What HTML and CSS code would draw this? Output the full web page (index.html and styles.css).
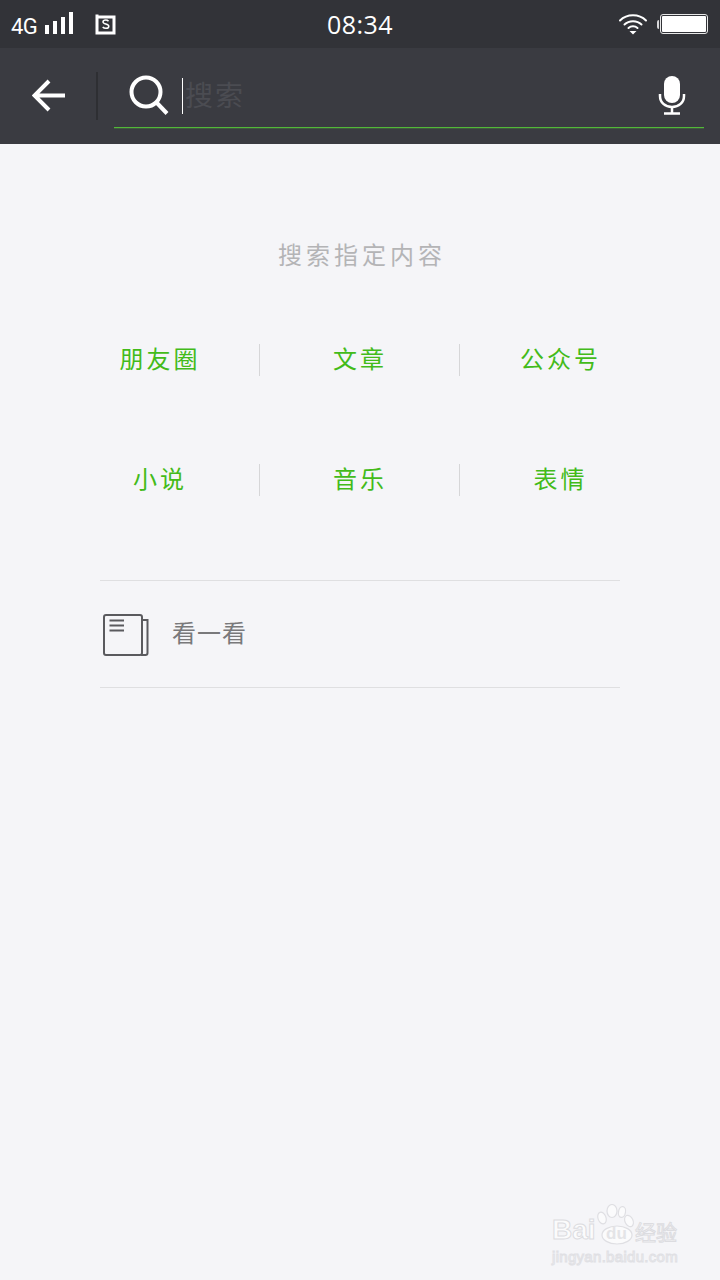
FILE: index.html
```html
<!DOCTYPE html>
<html lang="zh-CN">
  <head>
    <meta charset="UTF-8" />
    <meta name="viewport" content="width=device-width, initial-scale=1.0" />
    <title>搜索</title>
    <link rel="stylesheet" href="styles.css">
  </head>
  <body>
    <div class="status-bar">
      <div class="status-left">
        <span class="net">4G</span>
        <span class="signal"><i class="s1"></i><i class="s2"></i><i class="s3"></i><i class="s4"></i></span>
        <svg class="sim" width="22" height="22" viewBox="0 0 22 22">
          <path d="M3 1.500V20H20V4H4" fill="none" stroke="#fff" stroke-width="3" />
          <path d="M14.500 8.200C13.800 7.300 12.800 7 11.800 7C10.300 7 9 7.700 9 9C9 11.600 14.800 10.400 14.800 13.200C14.800 14.600 13.400 15.300 11.900 15.300C10.700 15.300 9.500 14.900 8.700 14" fill="none" stroke="#fff" stroke-width="1.500" />
        </svg>
      </div>
      <div class="clock">08:34</div>
      <div class="status-right">
        <svg width="30" height="24" viewBox="0 0 30 24">
          <g fill="none" stroke="#fff" stroke-width="2" stroke-linecap="round">
            <path d="M2 8.500C9 1.500 21 1.500 28 8.500" />
            <path d="M6.500 12.500C11 8 19 8 23.500 12.500" />
            <path d="M10.500 16C13 13.800 17 13.800 19.500 16" />
          </g>
          <path d="M11.500 19H18.500L15 22.500Z" fill="#fff" />
        </svg>
        <span class="battery-tip"></span>
        <span class="battery"><span class="battery-fill"></span></span>
      </div>
    </div>

    <div class="search-bar">
      <div class="back">
        <svg width="34" height="34" viewBox="0 0 34 34">
          <path d="M33 16.500H4M17 2L2.500 16.500L17 31" fill="none" stroke="#fff" stroke-width="4" />
        </svg>
      </div>
      <div class="search-field">
        <svg class="search-icon" width="40" height="40" viewBox="0 0 40 40">
          <circle cx="17" cy="17" r="14.500" fill="none" stroke="#fff" stroke-width="4" />
          <path d="M27.500 27.500L38 38.500" fill="none" stroke="#fff" stroke-width="4" />
        </svg>
        <span class="cursor"></span>
        <span class="placeholder">搜索</span>
        <svg class="mic" width="28" height="40" viewBox="0 0 28 40">
          <rect x="6" y="1" width="16" height="27" rx="8" fill="#fff" />
          <path d="M2 19V21C2 27.500 7 32 14 32C21 32 26 27.500 26 21V19" fill="none" stroke="#fff" stroke-width="2.500" />
          <path d="M14 32V38M6 38.500H22" fill="none" stroke="#fff" stroke-width="2.500" />
        </svg>
      </div>
    </div>

    <div class="content">
      <div class="title">搜索指定内容</div>
      <div class="types">
        <div class="type">朋友圈</div>
        <div class="type">文章</div>
        <div class="type">公众号</div>
        <div class="type">小说</div>
        <div class="type">音乐</div>
        <div class="type">表情</div>
      </div>
      <div class="look">
        <svg class="look-icon" width="46" height="42" viewBox="0 0 46 42">
          <rect x="1" y="1" width="38" height="40" rx="2" fill="none" stroke="#5a5a5e" stroke-width="2" />
          <path d="M39 6H44.500V39C44.500 40.200 43.700 41 42.500 41H38M6.500 6.500H21M6.500 11.500H21M6.500 16.500H21" fill="none" stroke="#5a5a5e" stroke-width="2" />
        </svg>
        <span class="look-text">看一看</span>
      </div>
    </div>

    <div class="watermark">
      <div class="wm-top">
        <span class="wm-bai">Bai</span>
        <span class="wm-paw">
          <svg width="40" height="42" viewBox="0 0 40 42">
            <g fill="#fbfbfc" stroke="#dfdfe3" stroke-width="1.200">
              <ellipse cx="7" cy="14" rx="4" ry="6" transform="rotate(-20 7 14)" />
              <ellipse cx="17" cy="7" rx="5" ry="6.500" />
              <ellipse cx="27" cy="8" rx="3.500" ry="5.500" transform="rotate(10 27 8)" />
              <ellipse cx="34" cy="17" rx="4" ry="6" transform="rotate(-25 34 17)" />
              <ellipse cx="22" cy="31" rx="15" ry="9" />
            </g>
          </svg>
          <span class="wm-du">du</span>
        </span>
        <span class="wm-cn">经验</span>
      </div>
      <div class="wm-url">jingyan.baidu.com</div>
    </div>
  </body>
</html>
```

FILE: styles.css
```css
html,
body {
  margin: 0;
  padding: 0;
}

body {
  position: relative;
  width: 720px;
  height: 1280px;
  overflow: hidden;
  background: #f5f5f8;
  font-family: "Noto Sans CJK SC", "Noto Sans", sans-serif;
}

.status-bar {
  display: grid;
  grid-template-columns: 1fr auto 1fr;
  align-items: center;
  height: 48px;
  padding: 0 12px;
  box-sizing: border-box;
  background: #323338;
  color: #fff;
}

.status-left {
  display: flex;
  align-items: center;
}

.net {
  width: 33px;
  margin-top: 5px;
  margin-left: -1px;
  margin-right: 1px;
  font-family: Roboto, sans-serif;
  font-size: 22px;
  letter-spacing: -0.500px;
  line-height: 26px;
}

.signal {
  display: flex;
  align-items: flex-end;
  gap: 4px;
  height: 22px;
  margin-top: -2px;
}

.signal i {
  display: block;
  width: 4px;
  background: #fff;
}

.s1 {
  height: 9px;
}

.s2 {
  height: 13px;
}

.s3 {
  height: 17px;
}

.s4 {
  height: 22px;
}

.sim {
  margin-left: 21px;
  margin-top: -1px;
}

.clock {
  font-family: "Open Sans", sans-serif;
  font-size: 25px;
  letter-spacing: 0.500px;
  line-height: 46px;
}

.status-right {
  display: flex;
  align-items: center;
  justify-content: flex-end;
}

.status-right svg {
  margin-right: 9px;
}

.battery-tip {
  width: 2px;
  height: 9px;
  margin-right: 1px;
  border-radius: 2px 0 0 2px;
  background: #d8d8da;
}

.battery {
  display: block;
  width: 48px;
  height: 20px;
  padding: 1px;
  box-sizing: border-box;
  border: 1px solid #e8e8e8;
  border-radius: 3px;
}

.battery-fill {
  display: block;
  height: 100%;
  border-radius: 1px;
  background: #fff;
}

.search-bar {
  display: flex;
  height: 96px;
  padding: 0 16px 0 0;
  box-sizing: border-box;
  background: #3a3b41;
}

.back {
  display: flex;
  align-items: center;
  width: 98px;
  height: 48px;
  margin-top: 24px;
  padding-left: 32px;
  box-sizing: border-box;
  border-right: 2px solid #2e2f33;
  flex-shrink: 0;
}

.search-field {
  display: flex;
  align-items: center;
  flex: 1;
  height: 80px;
  margin-left: 16px;
  padding: 15px 18px 0 15px;
  box-sizing: border-box;
  border-bottom: 1px solid #52b838;
  box-shadow: 0 1px 0 rgba(82, 184, 56, 0.25);
}

.search-icon {
  flex-shrink: 0;
}

.cursor {
  width: 1px;
  height: 36px;
  margin-left: 13px;
  margin-top: 1px;
  background: #fff;
}

.placeholder {
  flex: 1;
  margin-left: 2px;
  margin-top: -2px;
  font-size: 28px;
  letter-spacing: 2px;
  line-height: 40px;
  color: #4b4c52;
}

.mic {
  flex-shrink: 0;
}

.content {
  padding-top: 94px;
}

.title {
  padding-left: 4px;
  font-size: 24px;
  letter-spacing: 4px;
  line-height: 32px;
  text-align: center;
  color: #b4b4b6;
}

.types {
  display: grid;
  grid-template-columns: repeat(3, 200px);
  grid-auto-rows: 32px;
  row-gap: 88px;
  width: 600px;
  margin: 74px auto 0;
}

.type {
  padding-left: 1px;
  font-size: 24px;
  letter-spacing: 3px;
  line-height: 28px;
  text-align: center;
  color: #43bb1a;
  border-right: 1px solid #d6d6d8;
}

.type:nth-child(3n) {
  border-right: none;
}

.look {
  display: flex;
  align-items: center;
  height: 108px;
  width: 520px;
  margin: 84px auto 0;
  padding-left: 3px;
  box-sizing: border-box;
  border-top: 1px solid #dfdfe1;
  border-bottom: 1px solid #dfdfe1;
}

.look-icon {
  margin-top: 2px;
}

.look-text {
  margin-left: 23px;
  margin-top: -6px;
  font-size: 24px;
  letter-spacing: 1px;
  color: #79797b;
}

/* 水印 */
.watermark {
  position: absolute;
  left: 552px;
  top: 1202px;
  width: 130px;
  color: #fbfbfc;
}

.wm-top {
  display: flex;
  align-items: flex-end;
  height: 44px;
}

.wm-bai {
  width: 43px;
  font-family: "Liberation Sans", sans-serif;
  font-size: 28px;
  font-weight: bold;
  line-height: 32px;
  -webkit-text-stroke: 1px #dcdce0;
}

.wm-paw {
  position: relative;
  width: 40px;
  height: 42px;
}

.wm-du {
  position: absolute;
  left: 11px;
  bottom: 3px;
  font-family: "Liberation Sans", sans-serif;
  font-size: 17px;
  font-weight: bold;
  line-height: 18px;
  color: #e4e4e7;
}

.wm-cn {
  font-size: 21px;
  line-height: 30px;
  -webkit-text-stroke: 1px #dcdce0;
}

.wm-url {
  margin-top: 2px;
  font-family: "Liberation Sans", sans-serif;
  font-size: 15px;
  line-height: 18px;
  letter-spacing: 0.300px;
  white-space: nowrap;
  -webkit-text-stroke: 1px #e0e0e4;
}
```
